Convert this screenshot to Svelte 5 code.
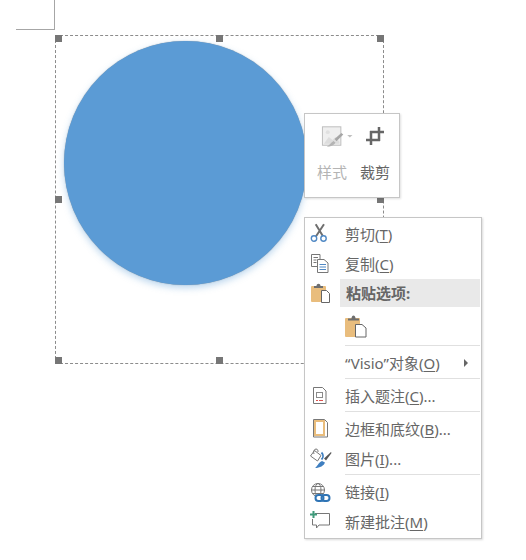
<script>
  const handles = [
    [55, 35], [216, 35], [377, 35],
    [55, 196], [377, 196],
    [55, 357], [216, 357], [377, 357]
  ];
</script>

<div class="page">
  <div class="crop-mark"></div>
  <div class="selection"></div>
  <div class="circle"></div>
  {#each handles as h}
    <div class="handle" style="left:{h[0]}px;top:{h[1]}px"></div>
  {/each}

  <div class="toolbar">
    <div class="tool disabled">
      <div class="tool-icon">
        <svg width="34" height="26" viewBox="0 0 34 26">
          <rect x="2.500" y="2.500" width="19" height="19" fill="#efefef" stroke="#bdbdbd"/>
          <path d="M4 20l5-7 4 3 3-3 4 5v2z" fill="#dddddd"/>
          <circle cx="8" cy="8" r="2" fill="#e0e0e0"/>
          <path d="M15 15l7-6 2 1.500-7 7z" fill="#a6a6a6"/>
          <path d="M7 23c2-1 4-4 7-6l2 2c-2 3-5 4-9 4z" fill="#b4b4b4"/>
          <path d="M28 11h5.500l-2.750 2.500z" fill="#c0c0c0"/>
        </svg>
      </div>
      <span>样式</span>
    </div>
    <div class="tool">
      <div class="tool-icon">
        <svg width="24" height="26" viewBox="0 0 24 26">
          <path d="M8 21V7M7 8H21M16 3V17M17 16H3" fill="none" stroke="#666" stroke-width="2.500"/>
        </svg>
      </div>
      <span>裁剪</span>
    </div>
  </div>

  <div class="menu">
    <div class="row">
      <span class="ico">
        <svg width="22" height="22" viewBox="0 0 22 22">
          <path d="M5.700 1.300l7.600 12.400M14 1.300L5.700 13.700" stroke="#6f6f6f" stroke-width="2" fill="none"/>
          <circle cx="4" cy="15.500" r="2.700" fill="#fff" stroke="#4f88c4" stroke-width="1.400"/>
          <circle cx="13.500" cy="15.500" r="2.700" fill="#fff" stroke="#4f88c4" stroke-width="1.400"/>
        </svg>
      </span>
      <span class="label">剪切(<u>T</u>)</span>
    </div>
    <div class="row">
      <span class="ico">
        <svg width="22" height="22" viewBox="0 0 22 22">
          <path d="M1.500 1.500h8.500v12H1.500z" fill="#fff" stroke="#777"/>
          <path d="M3.500 4.500h4.500M3.500 7h3M3.500 9.500h3" stroke="#777"/>
          <path d="M7.500 6.500h6.500l4 3.500v9.500H7.500z" fill="#fff" stroke="#777"/>
          <path d="M9.500 11.500h6.500M9.500 14h6.500M9.500 16.500h6.500" stroke="#4f88c4"/>
        </svg>
      </span>
      <span class="label">复制(<u>C</u>)</span>
    </div>
    <div class="row paste-head">
      <span class="ico">
        <svg width="22" height="22" viewBox="0 0 22 22">
          <rect x="1" y="4" width="15" height="16" rx="1" fill="#e9bd7d"/>
          <path d="M4 6V4h2.500c0-3 4-3 4 0H13v2z" fill="#6e6e6e"/>
          <path d="M11.500 8.500h5l3 3v9h-8z" fill="#fff" stroke="#666"/>
        </svg>
      </span>
      <span class="label head">粘贴选项:</span>
    </div>
    <div class="paste-options">
      <svg width="22" height="24" viewBox="0 0 22 24">
        <rect x="0" y="3" width="15" height="19" rx="1" fill="#e9bd7d"/>
        <path d="M3 5.500V3.500h3.500c0-4 4-4 4 0H14v2z" fill="#6e6e6e"/>
        <path d="M10.500 9.500h6.500l4 3.500v9h-10.500z" fill="#fff" stroke="#666"/>
      </svg>
    </div>
    <div class="sep"></div>
    <div class="row">
      <span class="ico"></span>
      <span class="label">“Visio”对象(<u>O</u>)</span>
      <span class="arrow"></span>
    </div>
    <div class="sep"></div>
    <div class="row">
      <span class="ico">
        <svg width="22" height="22" viewBox="0 0 22 22">
          <path d="M3.500 2.500h9l3.500 3.500v12.500H3.500z" fill="#fff" stroke="#777"/>
          <rect x="6.500" y="7.500" width="6" height="5" fill="none" stroke="#8a8a8a"/>
          <path d="M6 15.500h2M9 15.500h4" stroke="#d9534f"/>
        </svg>
      </span>
      <span class="label">插入题注(<u>C</u>)...</span>
    </div>
    <div class="sep"></div>
    <div class="row">
      <span class="ico">
        <svg width="22" height="22" viewBox="0 0 22 22">
          <path d="M3.500 1.500h11l3 3v14.500H3.500z" fill="#fff" stroke="#777"/>
          <path d="M4 3h10v14H5" fill="none" stroke="#e9bd7d" stroke-width="2"/>
          <path d="M5 2v16" stroke="#e9bd7d" stroke-width="2"/>
        </svg>
      </span>
      <span class="label">边框和底纹(<u>B</u>)...</span>
    </div>
    <div class="row">
      <span class="ico">
        <svg width="22" height="22" viewBox="0 0 22 22">
          <path d="M4.500 2.500l6.500 5-3.500 5.500L0.500 8z" fill="#fff" stroke="#777"/>
          <path d="M4 6c-1-2 0-5 2-5s2 2 2 3" fill="none" stroke="#777"/>
          <path d="M11.500 4.500c2 2 2 5 0 7" fill="none" stroke="#3f7fc0" stroke-width="1.800"/>
          <path d="M21 4l-7 6.500 2 2L21.500 5z" fill="#555"/>
          <path d="M5 20c2-1 3-5 7-7l3 1.500c-1 3-5 5.500-10 5.500z" fill="#3f7fc0"/>
        </svg>
      </span>
      <span class="label">图片(<u>I</u>)...</span>
    </div>
    <div class="sep"></div>
    <div class="row">
      <span class="ico">
        <svg width="22" height="22" viewBox="0 0 22 22">
          <g fill="none" stroke="#777">
            <circle cx="8" cy="9" r="6.500"/>
            <ellipse cx="8" cy="9" rx="3" ry="6.500"/>
            <path d="M1.500 9h13M2.500 5.500h11M2.500 12.500h11"/>
          </g>
          <rect x="5.500" y="14" width="8" height="6" rx="3" fill="#fff" stroke="#2f74b5" stroke-width="2"/>
          <rect x="11.500" y="14" width="8" height="6" rx="3" fill="none" stroke="#2f74b5" stroke-width="2"/>
        </svg>
      </span>
      <span class="label">链接(<u>I</u>)</span>
    </div>
    <div class="row">
      <span class="ico">
        <svg width="22" height="22" viewBox="0 0 22 22">
          <path d="M5 2.500h14.500v11.500H9l-2.500 3v-3H2.500V8" fill="#fff" stroke="#777"/>
          <path d="M3.500 0v7M0 3.500h7" stroke="#3f9a7b" stroke-width="2"/>
        </svg>
      </span>
      <span class="label">新建批注(<u>M</u>)</span>
    </div>
  </div>
</div>

<style>
  :global(body) {
    margin: 0;
    background: #fff;
  }
  .page {
    position: relative;
    width: 526px;
    height: 560px;
    overflow: hidden;
    background: #fff;
    font-family: "Noto Sans", "Noto Sans CJK SC", sans-serif;
    font-size: 15px;
    color: #666;
  }
  .crop-mark {
    position: absolute;
    left: 16px;
    top: -1px;
    width: 38px;
    height: 30px;
    border-right: 1px solid #a6a6a6;
    border-bottom: 1px solid #a6a6a6;
  }
  .selection {
    position: absolute;
    left: 55px;
    top: 35px;
    width: 327px;
    height: 327px;
    border: 1px dashed #8c8c8c;
  }
  .circle {
    position: absolute;
    left: 64px;
    top: 41px;
    width: 243px;
    height: 244px;
    border-radius: 50%;
    background: #5b9bd5;
    box-shadow: 0 0 1px #7f8a94, 0 3px 7px rgba(91, 155, 213, 0.4);
  }
  .handle {
    position: absolute;
    width: 7px;
    height: 7px;
    background: #767676;
  }
  .toolbar {
    position: absolute;
    left: 304px;
    top: 113px;
    box-sizing: border-box;
    width: 96px;
    height: 85px;
    display: flex;
    padding-left: 6px;
    gap: 1px;
    background: #fff;
    border: 1px solid #c6c6c6;
    box-shadow: 1px 1px 2px rgba(0, 0, 0, 0.12);
  }
  .tool {
    display: flex;
    flex-direction: column;
    align-items: center;
    width: 42px;
    padding-top: 10px;
    line-height: 20px;
  }
  .tool-icon {
    height: 38px;
    display: flex;
    justify-content: center;
    align-self: stretch;
  }
  .tool.disabled {
    color: #b4b4b4;
  }
  .tool.disabled .tool-icon {
    justify-content: flex-start;
    padding-left: 9px;
  }
  .menu {
    position: absolute;
    left: 304px;
    top: 217px;
    width: 176px;
    padding: 1px 0;
    background: #fff;
    border: 1px solid #c6c6c6;
    box-shadow: 1px 1px 2px rgba(0, 0, 0, 0.15);
    display: flex;
    flex-direction: column;
  }
  .row {
    display: flex;
    align-items: center;
    height: 30px;
    flex: none;
    position: relative;
  }
  .ico {
    width: 40px;
    flex: none;
    padding-left: 5px;
    box-sizing: border-box;
    display: flex;
    align-items: center;
  }
  .label {
    line-height: 20px;
    white-space: nowrap;
  }
  u {
    text-underline-offset: 2px;
  }
  .paste-head {
    height: 28px;
  }
  .head {
    font-weight: 700;
    background: #e9e9e9;
    align-self: stretch;
    flex: 1;
    line-height: 28px;
    margin-right: 1px;
    margin-left: -5px;
    padding-left: 6px;
  }
  .paste-options {
    height: 38px;
    padding: 8px 0 0 40px;
    box-sizing: border-box;
    flex: none;
  }
  .sep {
    height: 1px;
    margin: 0 1px 2px 40px;
    background: #e0e0e0;
    flex: none;
  }
  .arrow {
    position: absolute;
    right: 13px;
    top: 11px;
    border-left: 4px solid #666;
    border-top: 4px solid transparent;
    border-bottom: 4px solid transparent;
  }
</style>
